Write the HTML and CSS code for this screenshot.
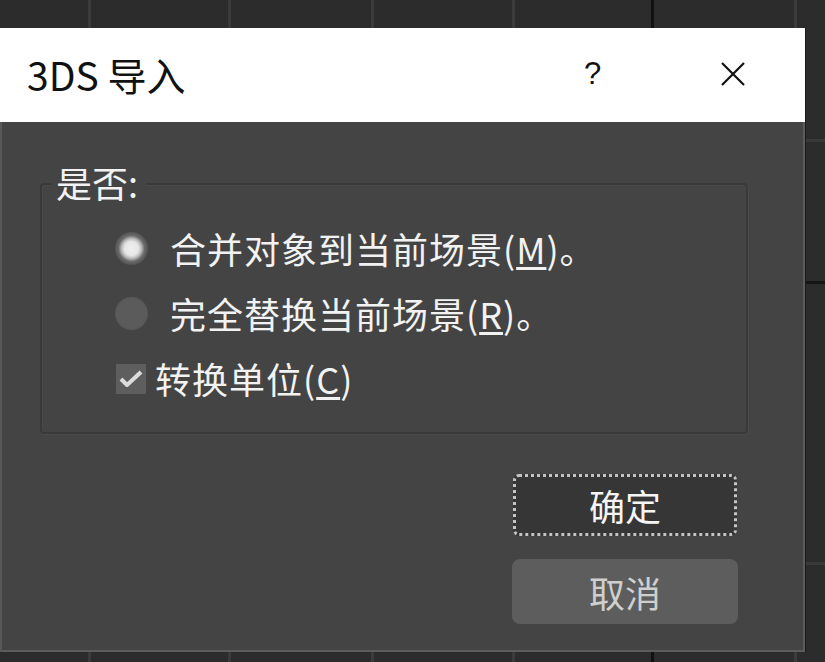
FILE: index.html
```html
<!DOCTYPE html>
<html lang="zh-CN">
<head>
<meta charset="utf-8">
<title>3DS 导入</title>
<link rel="stylesheet" href="styles.css">
</head>
<body>
<div class="desk">
  <div class="dialog">
    <div class="titlebar">
      <span class="title">3DS 导入</span>
      <span class="help">?</span>
      <svg class="close" width="26" height="26" viewBox="0 0 26 26"><path d="M2 2 L24 24 M24 2 L2 24" stroke="#111" stroke-width="2.2" fill="none"/></svg>
    </div>
    <div class="body">
      <div class="group">
        <span class="legend">是否:</span>
        <div class="row">
          <span class="radio on"></span>
          <span class="label">合并对象到当前场景(<u>M</u>)。</span>
        </div>
        <div class="row">
          <span class="radio"></span>
          <span class="label">完全替换当前场景(<u>R</u>)。</span>
        </div>
        <div class="row check-row">
          <span class="check"><svg width="30" height="30" viewBox="0 0 30 30"><path d="M5 15 L11 21 L25 8" stroke="#dcdcdc" stroke-width="4" fill="none" stroke-linejoin="round"/></svg></span>
          <span class="label">转换单位(<u>C</u>)</span>
        </div>
      </div>
      <div class="buttons">
        <div class="btn ok">确定</div>
        <div class="btn cancel">取消</div>
      </div>
    </div>
  </div>
</div>
</body>
</html>
```

FILE: styles.css
```css
html, body {
  margin: 0;
  padding: 0;
}
body {
  width: 825px;
  height: 662px;
  overflow: hidden;
  background-color: #2c2c2c;
  background-image:
    linear-gradient(90deg, transparent 651px, #111 651px, #111 654px, transparent 654px),
    linear-gradient(90deg, transparent 88px, #3b3b3b 88px, #3b3b3b 91px, transparent 91px,
      transparent 228px, #3b3b3b 228px, #3b3b3b 231px, transparent 231px,
      transparent 371px, #3b3b3b 371px, #3b3b3b 374px, transparent 374px,
      transparent 512px, #3b3b3b 512px, #3b3b3b 515px, transparent 515px,
      transparent 794px, #3b3b3b 794px, #3b3b3b 797px, transparent 797px),
    linear-gradient(180deg, transparent 139px, #393939 139px, #393939 142px, transparent 142px,
      transparent 281px, #151515 281px, #151515 284px, transparent 284px,
      transparent 562px, #393939 562px, #393939 565px, transparent 565px);
  background-size: 825px 662px, 825px 662px, 825px 662px;
  background-repeat: no-repeat;
  font-family: "Noto Sans CJK SC", "Noto Sans", sans-serif;
}
.desk {
  padding-top: 28px;
}
.dialog {
  width: 805px;
  height: 624px;
  display: flex;
  flex-direction: column;
  background: #444444;
  box-shadow: 1px 0 0 #1a1a1a;
}
.titlebar {
  height: 94px;
  background: #ffffff;
  display: flex;
  align-items: center;
  padding-left: 27px;
  box-sizing: border-box;
  flex: none;
}
.title {
  font-family: "Noto Sans CJK SC", sans-serif;
  font-size: 39px;
  color: #111;
  flex: 1;
  letter-spacing: 0px;
  position: relative;
  top: -1px;
}
.help {
  font-family: "Liberation Sans", sans-serif;
  font-size: 31px;
  color: #111;
  width: 136px;
  position: relative;
  top: -1px;
}
.close {
  margin-right: 59px;
  position: relative;
  top: -1px;
}
.body {
  flex: 1;
  border-left: 2px solid #585858;
  border-right: 2px solid #5c5c5c;
  border-bottom: 2px solid #5c5c5c;
  padding-top: 61px;
  padding-left: 38px;
  display: flex;
  flex-direction: column;
}
.group {
  position: relative;
  width: 708px;
  height: 251px;
  box-sizing: border-box;
  border: 2px solid #393939;
  border-radius: 4px;
  box-shadow: inset 1px 1px 0 #4a4a4a, 1px 1px 0 #4b4b4b;
  padding-top: 31px;
  padding-left: 73px;
}
.legend {
  position: absolute;
  left: 9px;
  top: -23px;
  background: #444444;
  padding: 0 8px 0 5px;
  font-size: 36px;
  line-height: 40px;
  color: #f2f2f2;
}
.row {
  height: 65px;
  display: flex;
  align-items: center;
}
.label {
  font-size: 36px;
  color: #f2f2f2;
  letter-spacing: 1px;
  line-height: 65px;
}
.label u {
  text-underline-offset: 3px;
}
.radio {
  width: 33px;
  height: 33px;
  border-radius: 50%;
  background: #5b5b5b;
  margin-right: 22px;
  flex: none;
  box-shadow: inset 0 0 2px #505050;
}
.radio.on {
  background: radial-gradient(circle, #efefef 0, #e6e6e6 7px, #b8b8b8 10px, #6a6a6a 13px, #595959 16px);
}
.check-row {
  padding-left: 1px;
}
.check {
  width: 30px;
  height: 30px;
  background: #5e5e5e;
  margin-right: 9px;
  flex: none;
  display: flex;
}
.check-row .label {
  letter-spacing: 1px;
}
.buttons {
  display: flex;
  flex-direction: column;
  align-items: flex-end;
  width: 697px;
  margin-top: 40px;
  gap: 23px;
}
.btn {
  width: 224px;
  display: flex;
  align-items: center;
  justify-content: center;
  font-size: 36px;
  box-sizing: border-box;
}
.ok {
  height: 62px;
  background: #363636;
  border: 3px dotted #c4c4c4;
  border-radius: 6px;
  color: #f5f5f5;
}
.cancel {
  height: 65px;
  background: #5d5d5d;
  border-radius: 8px;
  color: #cfcfcf;
  width: 226px;
  margin-right: -1px;
}
```
